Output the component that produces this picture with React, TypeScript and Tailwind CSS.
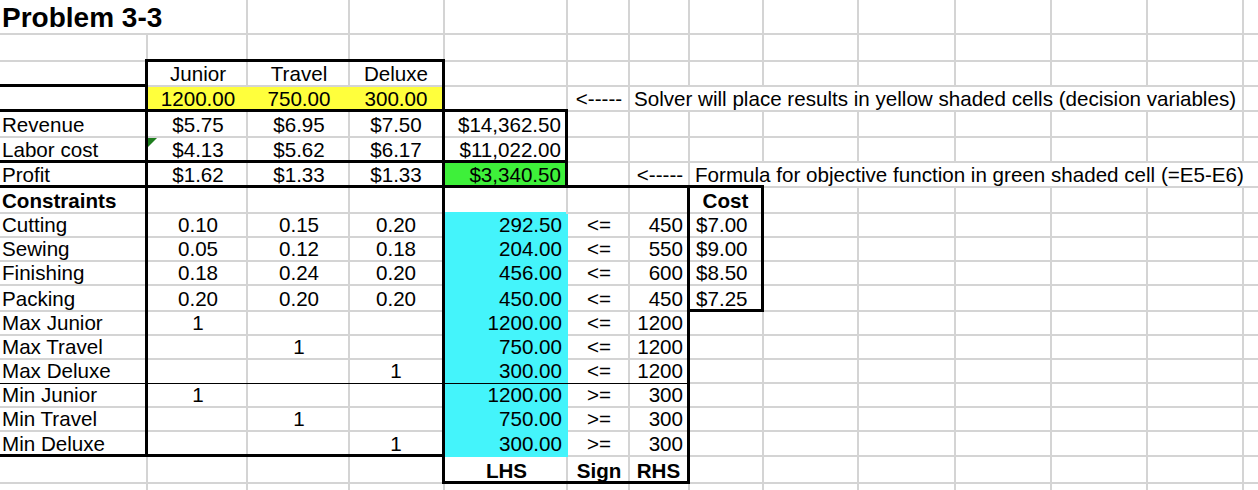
import React from "react";

type Align = "l" | "c" | "r" | "rc" | "h" | "g" | "f";
type CellData = { t: string; a: Align; b?: boolean; big?: boolean };

const data: Record<string, CellData> = {};
const put = (r: number, c: number, t: string, a: Align, b = false, big = false) => {
  data[`${r}-${c}`] = { t, a, b, big };
};

put(1, 0, "Problem 3-3", "l", true, true);
put(3, 1, "Junior", "c");
put(3, 2, "Travel", "c");
put(3, 3, "Deluxe", "c");
put(4, 1, "1200.00", "c");
put(4, 2, "750.00", "c");
put(4, 3, "300.00", "c");
put(4, 5, "<-----", "c");
put(4, 6, "Solver will place results in yellow shaded cells (decision variables)", "g");
put(5, 0, "Revenue", "l");
put(5, 1, "$5.75", "c");
put(5, 2, "$6.95", "c");
put(5, 3, "$7.50", "c");
put(5, 4, "$14,362.50", "r");
put(6, 0, "Labor cost", "l");
put(6, 1, "$4.13", "c");
put(6, 2, "$5.62", "c");
put(6, 3, "$6.17", "c");
put(6, 4, "$11,022.00", "r");
put(7, 0, "Profit", "l");
put(7, 1, "$1.62", "c");
put(7, 2, "$1.33", "c");
put(7, 3, "$1.33", "c");
put(7, 4, "$3,340.50", "r");
put(7, 6, "<-----", "c");
put(7, 7, "Formula for objective function in green shaded cell (=E5-E6)", "f");
put(8, 0, "Constraints", "l", true);
put(8, 7, "Cost", "c", true);

const constraints: [string, string, string, string, string, string, string, string][] = [
  ["Cutting", "0.10", "0.15", "0.20", "292.50", "<=", "450", "$7.00"],
  ["Sewing", "0.05", "0.12", "0.18", "204.00", "<=", "550", "$9.00"],
  ["Finishing", "0.18", "0.24", "0.20", "456.00", "<=", "600", "$8.50"],
  ["Packing", "0.20", "0.20", "0.20", "450.00", "<=", "450", "$7.25"],
  ["Max Junior", "1", "", "", "1200.00", "<=", "1200", ""],
  ["Max Travel", "", "1", "", "750.00", "<=", "1200", ""],
  ["Max Deluxe", "", "", "1", "300.00", "<=", "1200", ""],
  ["Min Junior", "1", "", "", "1200.00", ">=", "300", ""],
  ["Min Travel", "", "1", "", "750.00", ">=", "300", ""],
  ["Min Deluxe", "", "", "1", "300.00", ">=", "300", ""],
];
constraints.forEach((row, i) => {
  const r = 9 + i;
  put(r, 0, row[0], "l");
  if (row[1]) put(r, 1, row[1], "c");
  if (row[2]) put(r, 2, row[2], "c");
  if (row[3]) put(r, 3, row[3], "c");
  put(r, 4, row[4], "rc");
  put(r, 5, row[5], "c");
  put(r, 6, row[6], "r");
  if (row[7]) put(r, 7, row[7], "h");
});
put(19, 4, "LHS", "c", true);
put(19, 5, "Sign", "c", true);
put(19, 6, "RHS", "c", true);

type RB = "black" | "grey" | "none";
type BB = "black" | "thin" | "grey" | "none" | "cyan";

function rightB(r: number, c: number): RB {
  if (c === 13) return "none";
  if (r === 1 && c === 0) return "none";
  if (r === 4 && c >= 6 && c <= 11) return "none";
  if (r === 7 && c >= 7 && c <= 12) return "none";
  if (c === 0 && r >= 3 && r <= 18) return "black";
  if (c === 3 && r >= 3 && r <= 19) return "black";
  if (c === 4 && r >= 5 && r <= 7) return "black";
  if (c === 6 && r >= 8 && r <= 19) return "black";
  if (c === 7 && r >= 8 && r <= 12) return "black";
  if (r === 4 && (c === 1 || c === 2)) return "none";
  if (c === 4 && r >= 9 && r <= 18) return "none";
  return "grey";
}

function bottomB(r: number, c: number): BB {
  if (r === 20) return "none";
  if (r === 2 && c >= 1 && c <= 3) return "black";
  if (r === 3 && c === 0) return "black";
  if ((r === 4 || r === 6) && c <= 4) return "black";
  if (r === 7 && c <= 7) return "black";
  if (r === 12 && c === 7) return "black";
  if (r === 15 && c <= 6) return "thin";
  if (r === 18 && c <= 3) return "black";
  if (r === 19 && c >= 4 && c <= 6) return "black";
  if (r === 8 && c === 4) return "cyan";
  if (c === 4 && r >= 9 && r <= 18) return "none";
  return "grey";
}

function bgOf(r: number, c: number): string {
  if (r === 4 && c >= 1 && c <= 3) return "bg-[#ffff3c]";
  if (r === 7 && c === 4) return "bg-[#3ef03a]";
  if (c === 4 && r >= 9 && r <= 18) return "bg-[#44f4fb]";
  return "";
}

const alignCls: Record<Align, string> = {
  l: "justify-start pl-[2px]",
  c: "justify-center",
  r: "justify-end pr-[4px]",
  rc: "justify-end pr-[6px]",
  h: "justify-start pl-[6px]",
  g: "justify-start pl-[4px]",
  f: "justify-start pl-[5px]",
};

function Cell({ r, c }: { r: number; c: number }) {
  const rb = rightB(r, c);
  const bb = bottomB(r, c);
  const cls: string[] = ["relative flex items-end overflow-visible whitespace-nowrap"];
  if (rb === "black") cls.push("border-r-[3px] border-r-black");
  if (bb === "black") cls.push("border-b-[3px] border-b-black pb-0");
  else if (bb === "thin") cls.push("border-b border-b-black pb-[2px]");
  else cls.push("pb-[3px]");
  const rg = rb === "grey";
  if (rg && bb === "grey") cls.push("shadow-[inset_-2px_-2px_0_#d4d4d4]");
  else if (rg && bb === "cyan") cls.push("shadow-[inset_-2px_0_0_#d4d4d4,inset_0_-2px_0_#44f4fb]");
  else if (rg) cls.push("shadow-[inset_-2px_0_0_#d4d4d4]");
  else if (bb === "grey") cls.push("shadow-[inset_0_-2px_0_#d4d4d4]");
  else if (bb === "cyan") cls.push("shadow-[inset_0_-2px_0_#44f4fb]");
  const bg = bgOf(r, c);
  if (bg) cls.push(bg);
  const d = data[`${r}-${c}`];
  if (d) cls.push(alignCls[d.a]);
  return (
    <div className={cls.join(" ")}>
      {d && (
        <span
          className={
            d.big
              ? "text-[28px] leading-[28px] font-bold text-black"
              : d.b
              ? "text-[20.6px] leading-[20px] font-bold text-black"
              : "text-[20.6px] leading-[20px] text-black"
          }
        >
          {d.t}
        </span>
      )}
      {r === 6 && c === 1 && (
        <svg className="absolute left-0 top-0" width="9" height="9" viewBox="0 0 9 9">
          <polygon points="0,0 9,0 0,9" fill="#1d7d1d" />
        </svg>
      )}
      {r === 2 && c === 0 && <span className="absolute right-0 bottom-0 w-[3px] h-[3px] bg-black" />}
    </div>
  );
}

export default function App() {
  const cells: React.ReactNode[] = [];
  for (let r = 1; r <= 20; r++) {
    for (let c = 0; c < 14; c++) {
      cells.push(<Cell key={`${r}-${c}`} r={r} c={c} />);
    }
  }
  return (
    <div className="w-[1258px] h-[490px] overflow-hidden bg-white font-['Liberation_Sans',Arial,sans-serif]">
      <div className="grid grid-cols-[148px_100px_102px_95px_123px_62px_60px_74px_95px_97px_96px_96px_96px_14px] grid-rows-[35px_27px_25px_25px_26px_25px_25px_26px_24px_24px_24px_26px_24px_24px_24px_24px_24px_25px_27px_6px]">
        {cells}
      </div>
    </div>
  );
}
